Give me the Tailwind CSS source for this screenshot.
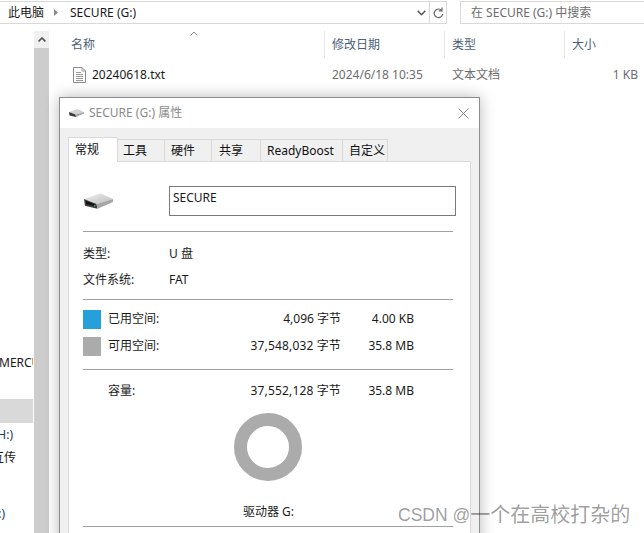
<!DOCTYPE html>
<html lang="en">
<head>
    <meta charset="UTF-8">
    <title>SECURE (G:) 属性</title>
    <script src="https://cdn.jsdelivr.net/npm/@tailwindcss/browser@4"></script>
</head>
<body class="bg-white">
    <div class="relative w-[644px] h-[533px] overflow-hidden bg-white text-[12px] text-[#1a1a1a] font-['Noto_Sans','Noto_Sans_CJK_SC',sans-serif]">
        <!-- address and search bars -->
        <div class="flex h-[23px] mt-px">
            <div class="w-[447px] h-[23px] flex items-center border-y border-r border-[#d9d9d9] pl-[8px] box-border">
                <span>此电脑</span>
                <svg class="ml-[10px] w-[5px] h-[7px]" viewBox="0 0 5 7"><path d="M0 0l4 3.5L0 7z" fill="#8a8a8a"/></svg>
                <span class="ml-[11px]">SECURE (G:)</span>
                <svg class="ml-auto mr-[3px] w-[9px] h-[6px]" viewBox="0 0 9 6"><path d="M.7.7l3.8 4 3.8-4" fill="none" stroke="#555" stroke-width="1.5"/></svg>
                <div class="w-[17px] h-full border-l border-[#d9d9d9] flex items-center justify-center">
                    <svg class="w-[11px] h-[12px]" viewBox="0 0 11 12"><path d="M8.8 3.5A4.3 4.3 0 1 0 9.8 7M9 .5v3.3H5.8" fill="none" stroke="#666" stroke-width="1.2"/></svg>
                </div>
            </div>
            <div class="ml-[13px] flex-1 h-[23px] flex items-center border-y border-l border-[#d9d9d9] pl-[10px] text-[#6d6d6d]">在 SECURE (G:) 中搜索</div>
        </div>

        <div class="flex h-[502px] mt-[7px]">
            <!-- navigation pane, cut by the left edge -->
            <div class="w-[33px] mr-px h-full overflow-hidden whitespace-nowrap">
                <div class="h-[322px]"></div>
                <div class="h-[20px] flex items-center -ml-px">MERCURY</div>
                <div class="h-[26px]"></div>
                <div class="h-[24px] bg-[#d9d9d9]"></div>
                <div class="h-[24px] flex items-center justify-end pr-[20px] text-[#1d3a5f]">(H:)</div>
                <div class="h-[22px] flex items-center justify-end pr-[17px]">互传</div>
                <div class="h-[34px]"></div>
                <div class="h-[22px] flex items-center justify-end pr-[28px] text-[#1d3a5f]">(:)</div>
            </div>
            <div class="w-[15px] h-full bg-[#cdcdcd] flex flex-col">
                <div class="h-[17px] bg-[#f0f0f0] flex items-center justify-center">
                    <svg class="w-[8px] h-[5px]" viewBox="0 0 8 5"><path d="M.6 4.4L4 1l3.4 3.4" fill="none" stroke="#505050" stroke-width="1.6"/></svg>
                </div>
            </div>

            <!-- file list -->
            <div class="flex-1 relative">
                <div class="flex h-[27px] text-[#4c6079] relative">
                    <div class="w-[276px] pl-[22px] pt-px flex items-center border-r border-[#e5e5e5]">名称</div>
                    <div class="w-[120px] pl-[7px] pt-px flex items-center border-r border-[#e5e5e5]">修改日期</div>
                    <div class="w-[120px] pl-[7px] pt-px flex items-center border-r border-[#e5e5e5]">类型</div>
                    <div class="flex-1 pl-[7px] pt-px flex items-center">大小</div>
                    <svg class="absolute left-[141px] top-[0px] w-[8px] h-[5px]" viewBox="0 0 8 5"><path d="M.5 4.5L4 1l3.5 3.5" fill="none" stroke="#8a8a8a"/></svg>
                </div>
                <div class="flex h-[24px] items-center mt-[5px]">
                    <svg class="ml-[24px] w-[13px] h-[16px] -mt-px" viewBox="0 0 13 16"><path d="M.5.5h8.500l3.500 3.500v11.500H.5z" fill="#fff" stroke="#8a8a8a"/><path d="M9 .5V4h3.500M3 5.500h5M3 7.500h7M3 9.500h7M3 11.500h7M3 13.500h7" fill="none" stroke="#9a9a9a"/></svg>
                    <span class="ml-[6px] w-[240px]">20240618.txt</span>
                    <span class="w-[120px] text-[#6d6d6d]">2024/6/18 10:35</span>
                    <span class="w-[120px] text-[#6d6d6d]">文本文档</span>
                    <span class="w-[66px] text-right text-[#6d6d6d]">1 KB</span>
                </div>
            </div>
        </div>

        <!-- properties window floats over the explorer -->
        <div class="absolute left-[59px] top-[97px] w-[421px] h-[450px] border border-[#8c8c8c] bg-[#f0f0f0] shadow-[0_0_14px_rgba(0,0,0,0.28)] flex flex-col">
            <div class="h-[30px] bg-white flex items-center pl-[9px] shrink-0 text-[#8a8a8a]">
                <svg class="w-[15px] h-[8px]" viewBox="0 0 30 16"><path d="M0 6L17 0l13 6-17 5z" fill="#d4d4d4"/><path d="M0 6l13 5 1 5-13-3z" fill="#3a3a3a"/><path d="M13 11l17-5v3L14 16z" fill="#a6a6a6"/></svg>
                <span class="ml-[5px]">SECURE (G:) 属性</span>
                <svg class="ml-auto mr-[10px] w-[11px] h-[11px]" viewBox="0 0 11 11"><path d="M.5.5l10 10M10.500.5l-10 10" stroke="#8a8a8a" fill="none"/></svg>
            </div>

            <div class="flex items-end pl-[8px] mt-[9px] h-[24px] shrink-0 text-[#111]">
                <div class="relative z-10 -mb-px w-[50px] h-[25px] bg-white border-x border-t border-[#d9d9d9] pl-[6px] flex items-center">常规</div>
                <div class="w-[47px] h-[22px] border-t border-r border-[#d9d9d9] pl-[5px] pt-px flex items-center">工具</div>
                <div class="w-[47px] h-[22px] border-t border-r border-[#d9d9d9] pl-[6px] pt-px flex items-center">硬件</div>
                <div class="w-[49px] h-[22px] border-t border-r border-[#d9d9d9] pl-[7px] pt-px flex items-center">共享</div>
                <div class="w-[82px] h-[22px] border-t border-r border-[#d9d9d9] pl-[6px] pt-px flex items-center">ReadyBoost</div>
                <div class="w-[45px] h-[22px] border-t border-r border-[#d9d9d9] pl-[6px] pt-px flex items-center">自定义</div>
            </div>

            <div class="ml-[8px] w-[403px] flex-1 bg-white border border-[#d9d9d9] pl-[14px] pt-[24px]">
                <div class="flex items-center h-[30px]">
                    <svg class="ml-px w-[29px] h-[16px] -mt-px" viewBox="0 0 30 16">
                        <defs><linearGradient id="driveTop" x1="0" y1="0" x2="1" y2="1"><stop offset="0" stop-color="#f0f0f0"/><stop offset="1" stop-color="#bdbdbd"/></linearGradient></defs>
                        <path d="M0 6L17 0l13 6-17 5z" fill="url(#driveTop)"/>
                        <path d="M0 6l13 5 1 5-13-3z" fill="#3a3a3a"/>
                        <path d="M2 8l10 3.500.5 2L2 11z" fill="#111"/>
                        <path d="M13 11l17-5v3L14 16z" fill="#a6a6a6"/>
                        <path d="M10.500 12.500l1.500.5" stroke="#35c46a" stroke-width="1.200"/>
                    </svg>
                    <div class="ml-[56px] w-[287px] h-[30px] border border-[#7a7a7a] pl-[3px] pt-px leading-[20px]">SECURE</div>
                </div>
                <div class="w-[370px] h-px bg-[#a0a0a0] mt-[15px]"></div>

                <div class="flex items-center h-[20px] mt-[12px]"><span class="w-[86px]">类型:</span><span>U 盘</span></div>
                <div class="flex items-center h-[20px] mt-[6px]"><span class="w-[86px]">文件系统:</span><span>FAT</span></div>
                <div class="w-[370px] h-px bg-[#a0a0a0] mt-[9px]"></div>

                <div class="flex items-center h-[19px] mt-[10px]">
                    <div class="w-[18px] h-[19px] bg-[#26a0da]"></div>
                    <span class="ml-[7px] w-[100px] -mt-px">已用空间:</span>
                    <span class="w-[133px] text-right -mt-px">4,096 字节</span>
                    <span class="w-[73px] text-right -mt-px">4.00 KB</span>
                </div>
                <div class="flex items-center h-[19px] mt-[8px]">
                    <div class="w-[18px] h-[19px] bg-[#ababab]"></div>
                    <span class="ml-[7px] w-[100px] -mt-px">可用空间:</span>
                    <span class="w-[133px] text-right -mt-px tracking-[0.15px]">37,548,032 字节</span>
                    <span class="w-[73px] text-right -mt-px">35.8 MB</span>
                </div>
                <div class="w-[370px] h-px bg-[#a0a0a0] mt-[13px]"></div>

                <div class="flex items-center h-[20px] mt-[10px] pt-px">
                    <span class="ml-[25px] w-[100px]">容量:</span>
                    <span class="w-[133px] text-right tracking-[0.15px]">37,552,128 字节</span>
                    <span class="w-[73px] text-right">35.8 MB</span>
                </div>
                <div class="ml-[151px] mt-[13px] w-[68px] h-[68px] rounded-full border-[13px] border-[#ababab] bg-white"></div>
                <div class="ml-[160px] mt-[20px] h-[20px] pt-px flex items-center">驱动器 G:</div>
                <div class="w-[370px] h-px bg-[#a0a0a0] mt-[5px]"></div>
            </div>
        </div>

        <!-- page watermark -->
        <div class="absolute left-[398px] top-[501px] h-[28px] flex items-center whitespace-nowrap text-[17.5px] text-black/40 font-['Liberation_Sans','Noto_Sans_CJK_SC',sans-serif]">CSDN @<span class="text-[20px]">一个在高校打杂的</span></div>
    </div>
</body>
</html>
